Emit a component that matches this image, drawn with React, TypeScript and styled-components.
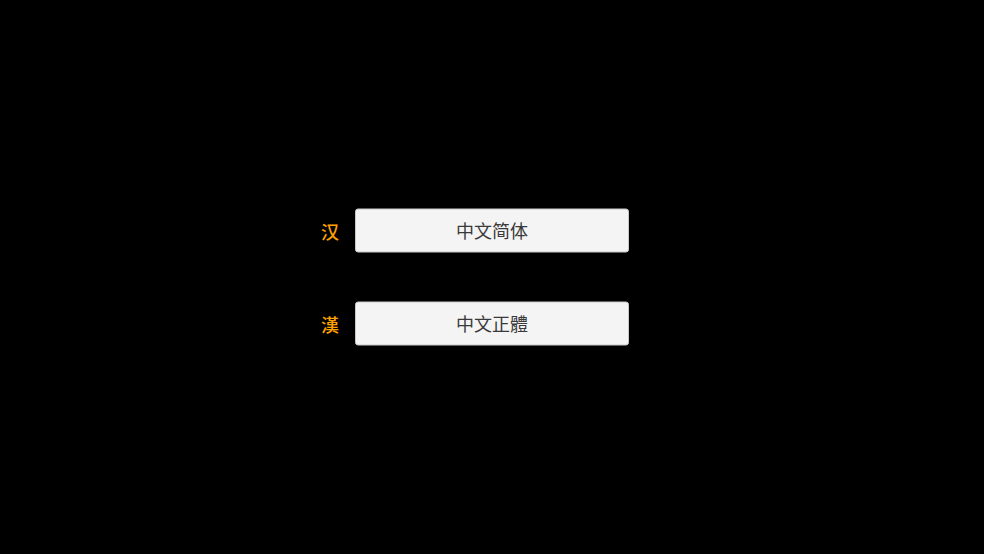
import React, { ReactElement } from 'react';
import styled, { createGlobalStyle } from 'styled-components';

const GlobalStyle = createGlobalStyle`
  html, body, #root {
    margin: 0;
    padding: 0;
    width: 100%;
    height: 100%;
    background: #000;
  }
  body {
    font-family: 'Noto Sans CJK SC', 'Noto Sans', sans-serif;
  }
`;

const Screen = styled.div`
  width: 100%;
  height: 100%;
  display: flex;
  align-items: center;
  justify-content: center;
`;

const OptionList = styled.div`
  display: grid;
  grid-template-columns: 1fr 274px 1fr;
  row-gap: 49px;
  width: 100%;
  align-items: center;
  transform: translateY(-0.5px);
`;

const Glyph = styled.span`
  grid-column: 1;
  justify-self: end;
  margin-right: 16px;
  font-size: 18px;
  font-weight: 500;
  line-height: 1;
  color: #ffa200;
`;

const LangButton = styled.button`
  grid-column: 2;
  height: 44px;
  padding: 0 0 2px;
  border: 1px solid #c8c8c8;
  border-radius: 3px;
  background: #f4f4f4;
  color: #3a3a3a;
  font-family: 'Noto Sans CJK SC', 'Noto Sans', sans-serif;
  font-size: 18px;
  font-weight: 400;
  line-height: 1;
  cursor: pointer;
`;

const options = [
  { glyph: '汉', label: '中文简体', lang: 'zh-Hans' },
  { glyph: '漢', label: '中文正體', lang: 'zh-Hant' },
];

function App(): ReactElement {
  return (
    <>
      <GlobalStyle />
      <Screen>
        <OptionList>
          {options.map((option) => (
            <React.Fragment key={option.lang}>
              <Glyph lang={option.lang}>{option.glyph}</Glyph>
              <LangButton lang={option.lang}>{option.label}</LangButton>
            </React.Fragment>
          ))}
        </OptionList>
      </Screen>
    </>
  );
}

export default App;
